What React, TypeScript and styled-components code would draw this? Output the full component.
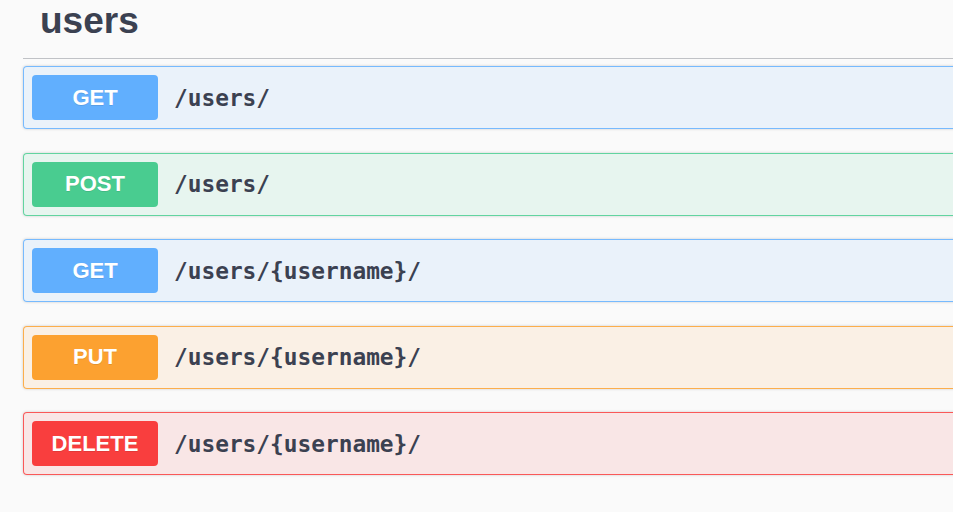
import React from 'react';
import styled, { createGlobalStyle } from 'styled-components';

type Method = 'get' | 'post' | 'put' | 'delete';

const METHOD_COLORS: Record<Method, string> = {
  get: '97, 175, 254',
  post: '73, 204, 144',
  put: '252, 161, 48',
  delete: '249, 62, 62',
};

const GlobalStyle = createGlobalStyle`
  html, body {
    margin: 0;
    padding: 0;
    background: #fafafa;
    overflow: hidden;
  }
`;

const Page = styled.div`
  padding-left: 23px;
  width: 960px;
  color: #3b4151;
`;

const TagHeading = styled.h4`
  margin: 0 0 7px;
  padding: 3px 0 19px 17px;
  font-family: 'Liberation Sans', Arial, sans-serif;
  font-weight: 700;
  font-size: 37px;
  line-height: 36px;
  color: #3b4151;
  border-bottom: 1px solid rgba(59, 65, 81, 0.3);
`;

const OpBlock = styled.div<{ $method: Method }>`
  display: flex;
  align-items: center;
  gap: 16px;
  height: 63px;
  box-sizing: border-box;
  padding: 0 8px;
  margin-bottom: 23.5px;
  border: 1px solid rgba(${(p) => METHOD_COLORS[p.$method]}, 0.85);
  border-radius: 4px;
  background: rgba(${(p) => METHOD_COLORS[p.$method]}, 0.1);
  box-shadow: 0 0 3px rgba(0, 0, 0, 0.19);
`;

const MethodBadge = styled.span<{ $method: Method }>`
  display: flex;
  align-items: center;
  justify-content: center;
  width: 126px;
  height: 45px;
  border-radius: 4px;
  background: rgb(${(p) => METHOD_COLORS[p.$method]});
  color: #fff;
  font-family: 'Liberation Sans', Arial, sans-serif;
  font-weight: 700;
  font-size: 22px;
  text-shadow: 0 1px 0 rgba(0, 0, 0, 0.1);
  text-transform: uppercase;
`;

const PathText = styled.span`
  font-family: 'DejaVu Sans Mono', monospace;
  font-weight: 700;
  font-size: 22.8px;
  color: #3b4151;
`;

const ops: { method: Method; path: string }[] = [
  { method: 'get', path: '/users/' },
  { method: 'post', path: '/users/' },
  { method: 'get', path: '/users/{username}/' },
  { method: 'put', path: '/users/{username}/' },
  { method: 'delete', path: '/users/{username}/' },
];

export default function App() {
  return (
    <Page>
      <GlobalStyle />
      <TagHeading>users</TagHeading>
      {ops.map((op, i) => (
        <OpBlock key={i} $method={op.method}>
          <MethodBadge $method={op.method}>{op.method}</MethodBadge>
          <PathText>{op.path}</PathText>
        </OpBlock>
      ))}
    </Page>
  );
}
